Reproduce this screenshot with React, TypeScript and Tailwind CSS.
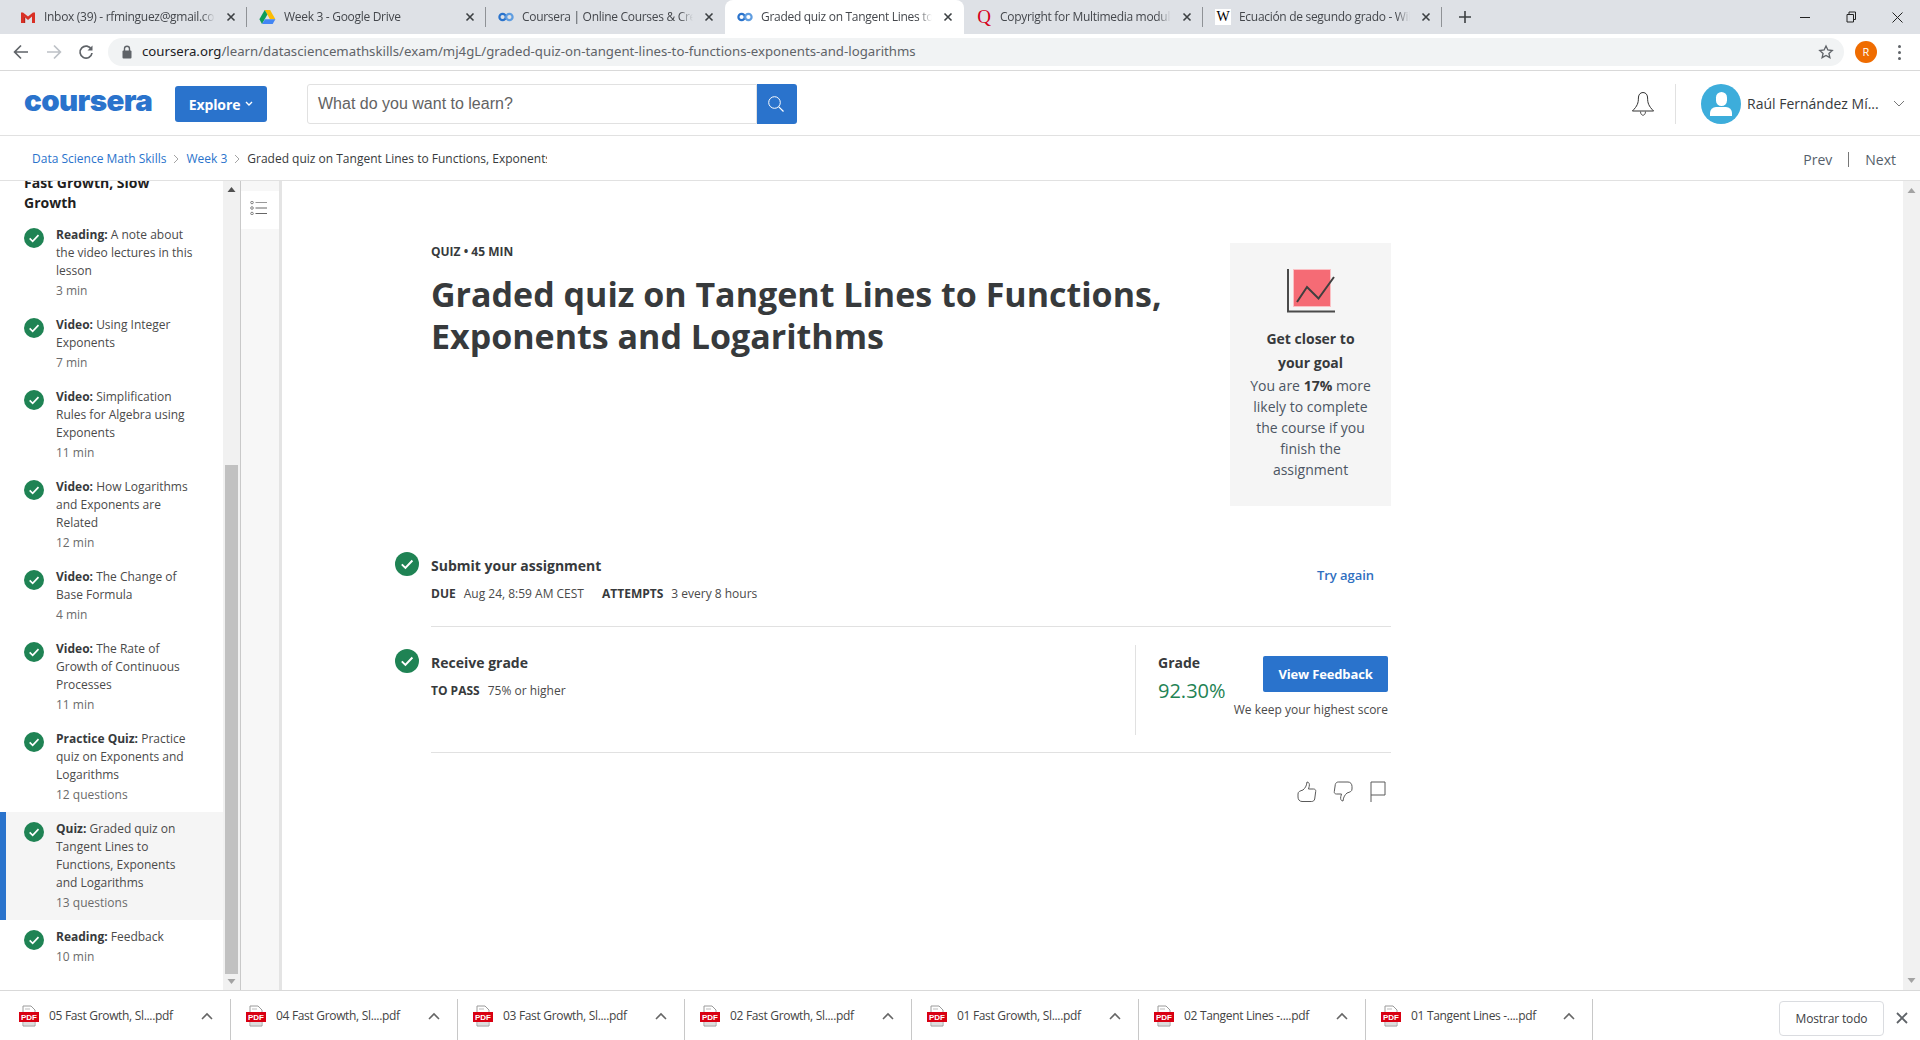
import React from 'react';

const OS = 'font-["Open_Sans",sans-serif]';

function Favicon({ kind }: { kind: string }) {
  if (kind === 'gmail')
    return (
      <svg width="16" height="16" viewBox="0 0 16 16" className="shrink-0">
        <path d="M1 3.500h2l5 4 5-4h2V14h-3V7.500L8 11 4 7.500V14H1z" fill="#d93025" />
        <path d="M4 7.500V14h1.200V8.500z" fill="#b3261e" />
      </svg>
    );
  if (kind === 'drive')
    return (
      <svg width="17" height="16" viewBox="0 0 17 16" className="shrink-0">
        <path d="M5.700 1h5.400l5.300 9.200h-5.400z" fill="#fbbc04" />
        <path d="M5.700 1l2.700 4.600L3 15 .4 10.300z" fill="#0f9d58" />
        <path d="M6 10.200h10.400L13.700 15H3z" fill="#4285f4" />
      </svg>
    );
  if (kind === 'coursera')
    return (
      <svg width="16" height="16" viewBox="0 0 16 16" fill="none" className="shrink-0">
        <circle cx="4.600" cy="8" r="3.200" stroke="#2a73cc" strokeWidth="2.200" />
        <circle cx="11.400" cy="8" r="3.200" stroke="#5f9de0" strokeWidth="2.200" />
      </svg>
    );
  if (kind === 'q')
    return (
      <span className='w-4 shrink-0 text-center text-[19px] leading-4 text-[#d6001c] font-["Liberation_Serif",serif]'>
        Q
      </span>
    );
  return (
    <span className='w-4 h-4 shrink-0 bg-white text-center text-[14px] leading-4 text-black font-["Liberation_Serif",serif]'>
      W
    </span>
  );
}

const tabs = [
  { kind: 'gmail', title: 'Inbox (39) - rfminguez@gmail.com' },
  { kind: 'drive', title: 'Week 3 - Google Drive' },
  { kind: 'coursera', title: 'Coursera | Online Courses & Credentials' },
  { kind: 'coursera', title: 'Graded quiz on Tangent Lines to Functions', active: true },
  { kind: 'q', title: 'Copyright for Multimedia modules' },
  { kind: 'w', title: 'Ecuación de segundo grado - Wikipedia' },
];

function TabBar() {
  return (
    <div className="h-[34px] bg-[#dee1e6] flex items-stretch pl-2 shrink-0">
      {tabs.map((t, i) => {
        const hideSep = t.active || tabs[i + 1]?.active;
        return (
          <div
            key={i}
            className={`w-[239px] pl-3 pr-2 flex items-center gap-2 relative ${t.active ? 'bg-white rounded-t-lg' : ''}`}
          >
            <Favicon kind={t.kind} />
            <span className="flex-1 min-w-0 overflow-hidden whitespace-nowrap text-[12px] tracking-[-0.3px] text-[#44474c] [mask-image:linear-gradient(to_right,black_92%,transparent)]">
              {t.title}
            </span>
            <svg width="10" height="10" viewBox="0 0 10 10" className="shrink-0 mx-[3px]">
              <path d="M1.500 1.500l7 7M8.500 1.500l-7 7" stroke="#3c4043" strokeWidth="1.600" />
            </svg>
            {!hideSep && <span className="absolute right-0 top-[7px] h-[20px] w-px bg-[#8f9296]" />}
          </div>
        );
      })}
      <div className="ml-[16px] flex items-center">
        <svg width="14" height="14" viewBox="0 0 14 14">
          <path d="M7 1v12M1 7h12" stroke="#3c4043" strokeWidth="1.600" />
        </svg>
      </div>
      <div className="ml-auto flex items-center">
        <div className="w-[46px] flex justify-center">
          <span className="w-[10px] h-px bg-[#222]" />
        </div>
        <div className="w-[46px] flex justify-center">
          <svg width="11" height="12" viewBox="0 0 11 12" fill="none">
            <path d="M1 3.500h6.500V11H1zM3 3.500V1h6.500v7.500h-2" stroke="#222" />
          </svg>
        </div>
        <div className="w-[46px] flex justify-center">
          <svg width="11" height="11" viewBox="0 0 11 11">
            <path d="M.5.5l10 10M10.500.5l-10 10" stroke="#222" />
          </svg>
        </div>
      </div>
    </div>
  );
}

function Toolbar() {
  return (
    <div className="h-[37px] bg-white border-b border-[#d9d9d9] flex items-center shrink-0">
      <div className="w-[108px] flex items-center shrink-0 pl-[13px]">
        <svg width="16" height="16" viewBox="0 0 16 16" fill="none">
          <path d="M15 8H2M8 1.500L1.600 8 8 14.500" stroke="#5f6368" strokeWidth="1.700" />
        </svg>
        <svg width="16" height="16" viewBox="0 0 16 16" fill="none" className="ml-[17px]">
          <path d="M1 8h13M8 1.500L14.400 8 8 14.500" stroke="#bdc1c6" strokeWidth="1.700" />
        </svg>
        <svg width="16" height="16" viewBox="0 0 16 16" fill="none" className="ml-[16px]">
          <path d="M13.400 5.400A6 6 0 1 0 14 9" stroke="#5f6368" strokeWidth="1.700" />
          <path d="M14.500 1.500v5h-5z" fill="#5f6368" />
        </svg>
      </div>
      <div className="w-[1736px] h-[28px] bg-[#f1f3f4] rounded-full flex items-center pl-[13px] pr-[10px] shrink-0">
        <svg width="12" height="14" viewBox="0 0 12 14" className="shrink-0">
          <rect x="1.500" y="5.500" width="9" height="8" rx="1" fill="#5f6368" />
          <path d="M3.500 6V3.800a2.500 2.500 0 0 1 5 0V6" fill="none" stroke="#5f6368" strokeWidth="1.400" />
        </svg>
        <span className="ml-[9px] text-[13.230px] text-[#5f6368] whitespace-nowrap font-['Noto_Sans',sans-serif]">
          <span className="text-[#202124]">coursera.org</span>
          /learn/datasciencemathskills/exam/mj4gL/graded-quiz-on-tangent-lines-to-functions-exponents-and-logarithms
        </span>
        <svg width="16" height="16" viewBox="0 0 24 24" fill="none" className="ml-auto shrink-0">
          <path d="M12 3l2.800 6 6.500.7-4.900 4.400 1.400 6.400L12 17.200l-5.800 3.300 1.400-6.400L2.700 9.700 9.200 9z" stroke="#5f6368" strokeWidth="2" />
        </svg>
      </div>
      <span className="ml-[11px] w-[22px] h-[22px] rounded-full bg-[#ef6c00] text-white text-[11px] flex items-center justify-center shrink-0">R</span>
      <span className="ml-[21px] flex flex-col gap-[3px] shrink-0">
        <span className="w-[3px] h-[3px] rounded-full bg-[#5f6368]" />
        <span className="w-[3px] h-[3px] rounded-full bg-[#5f6368]" />
        <span className="w-[3px] h-[3px] rounded-full bg-[#5f6368]" />
      </span>
    </div>
  );
}

function NavBar() {
  return (
    <div className="h-[65px] bg-white border-b border-[#e1e1e1] flex items-center pl-[24px] pt-[2px] shrink-0">
      <span className='w-[151px] pb-[6px] text-[29.500px] leading-none font-black tracking-[-0.6px] text-[#2a73cc] font-["Inter",sans-serif] shrink-0'>
        coursera
      </span>
      <button className="w-[92px] h-[36px] bg-[#2a73cc] rounded-[3px] text-white text-[14px] tracking-[-0.1px] font-bold flex items-center justify-center gap-[5px] shrink-0">
        Explore
        <svg width="8" height="6" viewBox="0 0 8 6" fill="none">
          <path d="M1 1l3 3 3-3" stroke="#fff" strokeWidth="1.400" />
        </svg>
      </button>
      <div className="ml-[40px] w-[490px] h-[40px] flex shrink-0">
        <div className='flex-1 border border-[#e1e1e1] rounded-l-[3px] flex items-center pl-[10px] text-[16px] text-[#636363] font-["Liberation_Sans",sans-serif]'>
          What do you want to learn?
        </div>
        <div className="w-[40px] bg-[#2a73cc] rounded-r-[3px] flex items-center justify-center pr-[2px]">
          <svg width="18" height="18" viewBox="0 0 18 18" fill="none">
            <circle cx="7.500" cy="7.500" r="5.800" stroke="#fff" strokeWidth="1" />
            <path d="M11.800 11.800L16.500 16.500" stroke="#fff" strokeWidth="1.200" />
          </svg>
        </div>
      </div>
      <div className="ml-auto flex items-center">
        <svg width="24" height="26" viewBox="0 0 24 26" fill="none">
          <path d="M12 1.500c-3 0-4.600 2.500-4.600 5.500 0 5-1 8-6 13h21.200c-5-5-6-8-6-13 0-3-1.600-5.500-4.600-5.500z" stroke="#333" strokeWidth="1" />
          <path d="M9.500 20.500c0 5 5 5 5 0" stroke="#555" strokeWidth="1" />
        </svg>
        <span className="ml-[20px] w-px h-[40px] bg-[#e1e1e1]" />
        <span className="ml-[25px] w-[40px] h-[40px] rounded-full bg-[#3daddb] overflow-hidden flex flex-col items-center">
          <span className="mt-[8px] w-[11px] h-[14px] rounded-full bg-white" />
          <span className="mt-[1px] w-[22px] h-[9px] rounded-t-[6px] bg-white" />
        </span>
        <span className={`ml-[6px] pb-[1px] w-[135px] text-[14px] text-[#373a3c] whitespace-nowrap ${OS}`}>Raúl Fernández Mí...</span>
        <svg width="12" height="8" viewBox="0 0 12 8" fill="none" className="ml-[11px] mr-[15px]">
          <path d="M1 1l5 5 5-5" stroke="#777" strokeWidth="1" />
        </svg>
      </div>
    </div>
  );
}

function Crumbs() {
  const Sep = () => (
    <svg width="6" height="10" viewBox="0 0 6 10" fill="none" className="mx-[7px] shrink-0">
      <path d="M1 1l4 4-4 4" stroke="#9a9a9a" strokeWidth="0.900" />
    </svg>
  );
  return (
    <div className={`h-[45px] bg-white border-b border-[#e1e1e1] flex items-center pl-[32px] pt-[2px] shrink-0 ${OS}`}>
      <span className="text-[12px] text-[#2a73cc]">Data Science Math Skills</span>
      <Sep />
      <span className="text-[12px] text-[#2a73cc]">Week 3</span>
      <Sep />
      <span className="w-[300px] overflow-hidden whitespace-nowrap text-[12px] text-[#373a3c]">
        Graded quiz on Tangent Lines to Functions, Exponents and Logarithms
      </span>
      <div className="ml-auto flex items-center text-[14px] text-[#565f6b]">
        <span>Prev</span>
        <span className="mx-[16px] w-px h-[15px] bg-[#777]" />
        <span className="mr-[24px]">Next</span>
      </div>
    </div>
  );
}

function Check({ size }: { size: number }) {
  return (
    <svg width={size} height={size} viewBox="0 0 24 24" className="shrink-0">
      <circle cx="12" cy="12" r="12" fill="#1f8354" />
      <path d="M6.800 12.400l3.600 3.500 7-7.400" fill="none" stroke="#fff" strokeWidth="2" />
    </svg>
  );
}

const items = [
  { k: 'Reading:', t: ['A note about', 'the video lectures in this', 'lesson'], m: '3 min' },
  { k: 'Video:', t: ['Using Integer', 'Exponents'], m: '7 min' },
  { k: 'Video:', t: ['Simplification', 'Rules for Algebra using', 'Exponents'], m: '11 min' },
  { k: 'Video:', t: ['How Logarithms', 'and Exponents are', 'Related'], m: '12 min' },
  { k: 'Video:', t: ['The Change of', 'Base Formula'], m: '4 min' },
  { k: 'Video:', t: ['The Rate of', 'Growth of Continuous', 'Processes'], m: '11 min' },
  { k: 'Practice Quiz:', t: ['Practice', 'quiz on Exponents and', 'Logarithms'], m: '12 questions' },
  { k: 'Quiz:', t: ['Graded quiz on', 'Tangent Lines to', 'Functions, Exponents', 'and Logarithms'], m: '13 questions', active: true },
  { k: 'Reading:', t: ['Feedback'], m: '10 min' },
];

function Sidebar() {
  return (
    <div className="flex shrink-0 h-full">
      <div className={`w-[223px] overflow-hidden bg-white ${OS}`}>
        <div className="-mt-[8px] pl-[24px] text-[14px] leading-[20px] font-bold text-[#1f1f1f] mb-[5px]">
          Fast Growth, Slow
          <br />
          Growth
        </div>
        {items.map((it, i) => (
          <div
            key={i}
            className={`flex py-2 pr-2 ${it.active ? 'bg-[#f5f5f5] border-l-[6px] border-[#2a73cc] pl-[18px]' : 'pl-[24px]'}`}
          >
            <div className="w-[32px] shrink-0 pt-[2px]">
              <Check size={20} />
            </div>
            <div className="text-[12px] leading-[18px] text-[#4a4a4a] whitespace-nowrap">
              <div>
                <span className="font-bold text-[#373a3c]">{it.k}</span> {it.t[0]}
              </div>
              {it.t.slice(1).map((l, j) => (
                <div key={j}>{l}</div>
              ))}
              <div className="mt-[2px] text-[#6b6b6b]">{it.m}</div>
            </div>
          </div>
        ))}
      </div>
      <div className="w-[17px] bg-[#f1f1f1] flex flex-col items-center relative shrink-0">
        <svg width="9" height="5" viewBox="0 0 9 5" className="mt-[6px]">
          <path d="M.5 5L4.500 0l4 5z" fill="#505050" />
        </svg>
        <div className="mt-[273px] w-[13px] h-[509px] bg-[#c1c1c1]" />
        <svg width="9" height="5" viewBox="0 0 9 5" className="mt-[5px]">
          <path d="M.5 0L4.500 5l4-5z" fill="#a3a3a3" />
        </svg>
      </div>
      <div className="w-[39px] bg-[#f7f7f7] border-l border-[#c9c9c9] pt-[10px] shrink-0">
        <div className="h-[38px] bg-white flex items-center pl-[9px] pb-[4px]">
          <svg width="17" height="14" viewBox="0 0 17 14" fill="none">
            <circle cx="2" cy="1.500" r="1.300" stroke="#666" strokeWidth="0.800" />
            <circle cx="2" cy="7" r="1.300" stroke="#666" strokeWidth="0.800" />
            <circle cx="2" cy="12.500" r="1.300" stroke="#666" strokeWidth="0.800" />
            <path d="M5.500 1.500H17" stroke="#999" strokeWidth="1" />
            <path d="M5.500 7H17M5.500 12.500H17" stroke="#666" strokeWidth="1" />
          </svg>
        </div>
      </div>
      <div className="w-[3px] bg-[#e4e4e4] shrink-0" />
    </div>
  );
}

function Pdf() {
  return (
    <svg width="20" height="22" viewBox="0 0 20 22" className="shrink-0">
      <path d="M4 1h8l4 4v16H4z" fill="#fff" stroke="#9a9a9a" />
      <path d="M5 18h10M5 20h10M6 4h5" stroke="#bbb" />
      <rect x="0" y="7" width="20" height="10" fill="#d90012" />
      <text x="10" y="15" textAnchor="middle" fontSize="8" fontWeight="700" fill="#fff" fontFamily="Liberation Sans, sans-serif">PDF</text>
    </svg>
  );
}

const downloads = [
  '05 Fast Growth, Sl....pdf',
  '04 Fast Growth, Sl....pdf',
  '03 Fast Growth, Sl....pdf',
  '02 Fast Growth, Sl....pdf',
  '01 Fast Growth, Sl....pdf',
  '02 Tangent Lines -....pdf',
  '01 Tangent Lines -....pdf',
];

function Downloads() {
  return (
    <div className="h-[50px] bg-white border-t border-[#d9d9d9] flex items-stretch shrink-0 pl-[4px] pt-[8px]">
      {downloads.map((d, i) => (
        <div key={i} className={`w-[227px] flex items-center border-r border-[#c8c8c8] pl-[15px] pb-[8px] ${OS}`}>
          <Pdf />
          <span className="ml-[10px] text-[12px] tracking-[-0.32px] text-[#444] whitespace-nowrap">{d}</span>
          <svg width="12" height="8" viewBox="0 0 12 8" fill="none" className="ml-auto mr-[17px]">
            <path d="M1 7l5-5 5 5" stroke="#666" strokeWidth="1.600" />
          </svg>
        </div>
      ))}
      <div className="flex-1 flex items-start justify-end pr-[12px]">
        <button className={`w-[105px] h-[35px] mt-[2px] rounded-[4px] border border-[#dadce0] text-[12px] tracking-[-0.15px] text-[#3c4043] ${OS}`}>
          Mostrar todo
        </button>
        <svg width="12" height="12" viewBox="0 0 12 12" className="ml-[12px] mt-[13px]">
          <path d="M1 1l10 10M11 1L1 11" stroke="#5f6368" strokeWidth="1.800" />
        </svg>
      </div>
    </div>
  );
}

function Main() {
  return (
    <div className={`flex-1 min-w-0 flex bg-white ${OS}`}>
      <div className="w-[1621px] shrink-0 pl-[113px]">
        <div className="w-[996px]">
          <div className="flex pl-[36px] pt-[62px]">
            <div className="w-[640px] pt-[1px]">
              <div className="text-[12px] leading-[16px] font-bold text-[#373a3c]">QUIZ • 45 MIN</div>
              <h1 className="mt-[13px] w-[760px] text-[34px] leading-[42px] font-bold text-[#373a3c]">
                Graded quiz on Tangent Lines to Functions, Exponents and Logarithms
              </h1>
            </div>
            <div className="ml-auto w-[161px] h-[263px] bg-[#f5f5f5] flex flex-col items-center text-[14px] text-[#4c5563] text-center">
              <svg width="48" height="44" viewBox="0 0 48 44" className="mt-[26px] shrink-0" fill="none">
                <rect x="6.500" y="0.500" width="37" height="37" fill="#f56b75" stroke="#fbc0c4" />
                <path d="M1 0v42.500h47" stroke="#4a4a4a" strokeWidth="2" />
                <path d="M10 33l10-15 11.500 11.500L47 8" stroke="#3f3f3f" strokeWidth="2" />
              </svg>
              <div className="mt-[14px] w-[120px] font-bold leading-[24px] text-[#373a3c]">Get closer to your goal</div>
              <div className="w-[132px] leading-[21px]">
                You are <b className="text-[#373a3c]">17%</b> more likely to complete the course if you finish the assignment
              </div>
            </div>
          </div>
          <div className="mt-[46px] flex">
            <div className="w-[36px] shrink-0">
              <Check size={24} />
            </div>
            <div className="flex-1 relative border-b border-[#e1e1e1] pb-[24px]">
              <div className="pt-[4px] text-[14px] leading-[20px] font-bold text-[#373a3c]">Submit your assignment</div>
              <div className="mt-[10px] flex text-[12px] leading-[16px] text-[#4a4a4a]">
                <b className="font-bold text-[#373a3c] mr-2">DUE</b>
                Aug 24, 8:59 AM CEST
                <b className="font-bold text-[#373a3c] ml-[18px] mr-2">ATTEMPTS</b>
                3 every 8 hours
              </div>
              <span className="absolute right-[17px] top-[13px] text-[13px] leading-[20px] tracking-[-0.05px] font-semibold text-[#2f6fc0]">Try again</span>
            </div>
          </div>
          <div className="mt-[22px] flex">
            <div className="w-[36px] shrink-0">
              <Check size={24} />
            </div>
            <div className="flex-1 flex border-b border-[#e1e1e1] pb-[17px] -mt-[4px]">
              <div className="w-[704px] pt-[8px]">
                <div className="text-[14px] leading-[20px] font-bold text-[#373a3c]">Receive grade</div>
                <div className="mt-[10px] flex text-[12px] leading-[16px] text-[#4a4a4a]">
                  <b className="font-bold text-[#373a3c] mr-2">TO PASS</b>
                  75% or higher
                </div>
              </div>
              <div className="h-[90px] border-l border-[#e1e1e1] pl-[22px] flex flex-1">
                <div className="pt-[8px]">
                  <div className="text-[14px] leading-[20px] font-bold text-[#373a3c]">Grade</div>
                  <div className="mt-[4px] text-[20px] leading-[28px] text-[#1f8354]">92.30%</div>
                </div>
                <div className="ml-auto mr-[3px] flex flex-col items-end pt-[11px]">
                  <button className="w-[125px] h-[36px] pt-[1px] bg-[#2a73cc] rounded-[2px] text-white text-[13px] tracking-[-0.15px] font-bold">View Feedback</button>
                  <div className="mt-[10px] text-[12px] leading-[16px] text-[#4a4a4a] whitespace-nowrap">We keep your highest score</div>
                </div>
              </div>
            </div>
          </div>
          <div className="mt-[28px] flex justify-end items-start pr-[5px]">
            <svg width="20" height="21" viewBox="0 0 20 21" fill="none" stroke="#5a5a5a" strokeWidth="1">
              <path d="M6 9c2-2 3.500-3.500 4-8 2 0 2.800 2 2.200 4.500L11.500 8h5c1.500 0 2.500 1 2.200 2.500l-1 7.500c-.3 1.500-1.500 2.500-3 2.500H5c-2.500 0-4-2-4-4.500v-3C1 10.500 3 10 6 9z" />
            </svg>
            <svg width="20" height="21" viewBox="0 0 20 21" fill="none" stroke="#5a5a5a" strokeWidth="1" className="ml-[16px]">
              <path d="M14 12c-2 2-3.500 3.500-4 8-2 0-2.800-2-2.200-4.500L8.500 13h-5C2 13 1 12 1.300 10.500l1-7C2.600 2 3.800 1 5.300 1H15c2.500 0 4 2 4 4.500v2.500c0 2.500-2 3-5 4z" />
            </svg>
            <svg width="16" height="21" viewBox="0 0 16 21" fill="none" stroke="#5a5a5a" strokeWidth="1" className="ml-[17px]">
              <path d="M1 21V1h14v13H1" />
            </svg>
          </div>
        </div>
      </div>
      <div className="ml-auto w-[17px] bg-[#f1f1f1] flex flex-col items-center justify-between py-[7px] shrink-0">
        <svg width="9" height="5" viewBox="0 0 9 5">
          <path d="M.5 5L4.500 0l4 5z" fill="#a3a3a3" />
        </svg>
        <svg width="9" height="5" viewBox="0 0 9 5">
          <path d="M.5 0L4.500 5l4-5z" fill="#a3a3a3" />
        </svg>
      </div>
    </div>
  );
}

export default function App() {
  return (
    <div className='w-[1920px] h-[1040px] overflow-hidden flex flex-col bg-white font-["Open_Sans",sans-serif]'>
      <TabBar />
      <Toolbar />
      <NavBar />
      <Crumbs />
      <div className="flex-1 min-h-0 flex overflow-hidden">
        <Sidebar />
        <Main />
      </div>
      <Downloads />
    </div>
  );
}
